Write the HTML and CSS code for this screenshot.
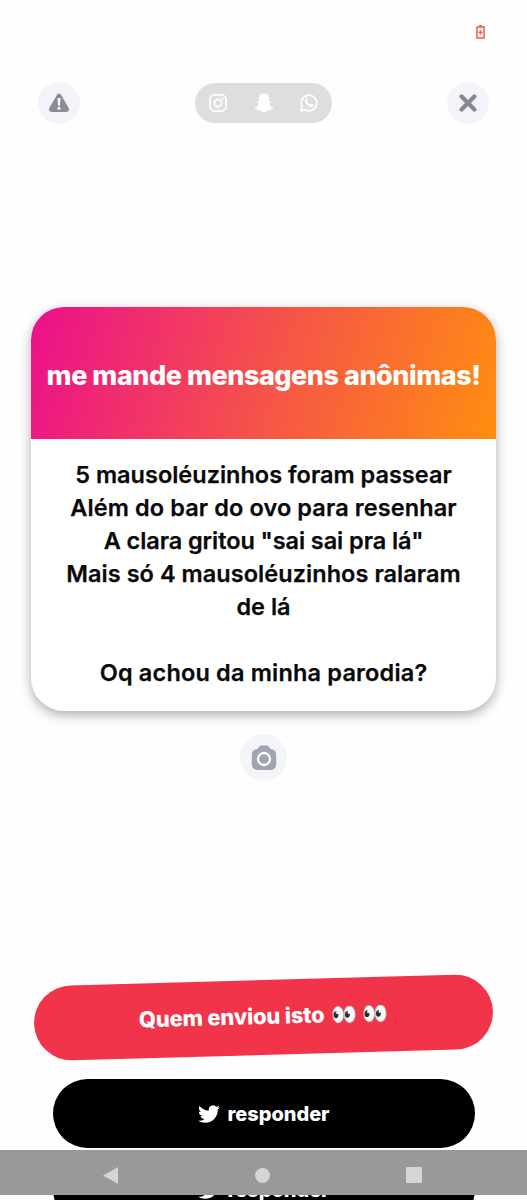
FILE: index.html
```
<!DOCTYPE html>
<html lang="pt-BR">
<head>
<meta charset="utf-8">
<title>me mande mensagens anônimas!</title>
<link rel="stylesheet" href="styles.css">
</head>
<body>
<div class="screen">
  <header class="status">
    <svg width="9" height="14" viewBox="0 0 9 14"><path d="M3 0h3v1.5H3z" fill="#e8624a"/><path d="M.9 2h7.2v11.1H.9z" fill="#fff3ec" stroke="#e8624a" stroke-width="1.5"/><path d="M4.5 5.2v4.4M2.4 7.4h4.2" stroke="#e8624a" stroke-width="1.4"/></svg>
  </header>
  <nav class="top">
    <button class="round" aria-label="Denunciar">
      <svg width="22" height="20" viewBox="0 0 22 20"><path d="M9 1.7Q11 -.8 13 1.7L20.7 15.1Q22 18.6 18.4 19H3.6Q0 18.6 1.3 15.1Z" fill="#8b8e98"/><path d="M9.6 5h2.8l-.4 7.7h-2z" fill="#f8f8fc"/><circle cx="11" cy="15.2" r="1.5" fill="#f8f8fc"/></svg>
    </button>
    <div class="networks">
      <svg width="18" height="18" viewBox="0 0 18 18" fill="none" stroke="#fff" stroke-width="1.7"><rect x=".9" y=".9" width="16.2" height="16.2" rx="4.6"/><circle cx="9" cy="9" r="3.6"/><circle cx="13.6" cy="4.4" r="1" fill="#fff" stroke="none"/></svg>
      <svg width="20" height="20" viewBox="0 0 20 20" fill="#fff"><path d="M10 .5C13.6.5 15.4 2.9 15.3 5.8L15.1 8.2C15.8 8.7 17 7.6 17.4 8.6C17.7 9.5 15.9 10 15.4 10.7C15.3 12.7 17.4 14.1 19.3 14.6C19.6 15.5 17.8 15.8 17 16.1C16.6 16.6 17 17.2 16.4 17.4C15.6 17.5 14.6 17.1 13.7 17.5C12.5 18 11.8 19.5 10 19.5S7.5 18 6.3 17.5C5.4 17.1 4.4 17.5 3.6 17.4C3 17.2 3.4 16.6 3 16.1C2.2 15.8.4 15.5.7 14.6C2.6 14.1 4.7 12.7 4.6 10.7C4.1 10 2.3 9.5 2.6 8.6C3 7.6 4.2 8.7 4.9 8.2L4.7 5.8C4.6 2.9 6.4.5 10 .5Z"/></svg>
      <svg width="18" height="18" viewBox="0 0 18 18"><path d="M1.1 16.9L2.2 12.8A7.8 7.8 0 1 1 5.2 15.8Z" fill="none" stroke="#fff" stroke-width="1.7" stroke-linejoin="round"/><path d="M6.1 4.6C6.5 4.3 7 4.3 7.2 4.8L7.9 6.5C8 6.9 7.4 7.5 7.2 7.8C7.8 9.1 8.8 10 10.2 10.6C10.6 10.3 11 9.5 11.5 9.7L13.1 10.5C13.7 10.8 13.4 11.8 13 12.3C12.3 13 11.2 13.2 10.2 12.8C7.7 12 5.9 10.2 5 7.8C4.6 6.6 5.2 5.2 6.1 4.6Z" fill="#fff"/></svg>
    </div>
    <button class="round" aria-label="Fechar">
      <svg width="18" height="18" viewBox="0 0 18 18"><path d="M2.6 2.6L15.4 15.4M15.4 2.6L2.6 15.4" stroke="#858890" stroke-width="4.2" stroke-linecap="round"/></svg>
    </button>
  </nav>
  <main class="content">
    <article class="card">
      <h1 class="prompt">me mande mensagens anônimas!</h1>
      <div class="message">
        <p class="l1">5 mausoléuzinhos foram passear</p>
        <p class="l2">Além do bar do ovo para resenhar</p>
        <p class="l3">A clara gritou "sai sai pra lá"</p>
        <p class="l4">Mais só 4 mausoléuzinhos ralaram</p>
        <p class="l5">de lá</p>
        <p class="l6">Oq achou da minha parodia?</p>
      </div>
    </article>
    <button class="camera" aria-label="Câmera">
      <svg width="26" height="26" viewBox="0 0 26 26"><path d="M8.3 1.4Q8.8.6 9.8.6H16.2Q17.2.6 17.7 1.4L19.4 4Q25 4.2 25.2 9.5V19Q25 25 19 25H7Q1 25 .8 19V9.5Q1 4.2 6.6 4Z" fill="#a0a5b1"/><circle cx="13" cy="14" r="6" fill="none" stroke="#fff" stroke-width="2.3"/></svg>
    </button>
  </main>
  <section class="actions">
    <button class="who"><span class="who-text">Quem enviou isto</span><span class="eyes">👀</span><span class="eyes">👀</span></button>
    <button class="reply"><svg width="22" height="18" viewBox="0 2 24 20" preserveAspectRatio="none"><path d="M23.95 4.57a10 10 0 0 1-2.82.78 4.96 4.96 0 0 0 2.16-2.73c-.95.56-2 .96-3.13 1.19a4.92 4.92 0 0 0-8.38 4.48C7.69 8.1 4.07 6.13 1.64 3.16a4.82 4.82 0 0 0-.67 2.48c0 1.71.87 3.21 2.19 4.1a4.9 4.9 0 0 1-2.23-.62v.06a4.92 4.92 0 0 0 3.95 4.83 5 5 0 0 1-2.21.08 4.94 4.94 0 0 0 4.6 3.42A9.87 9.87 0 0 1 0 19.54a13.99 13.99 0 0 0 7.56 2.21c9.05 0 14-7.5 14-13.98 0-.21 0-.42-.02-.63a9.94 9.94 0 0 0 2.41-2.57z" fill="#fff"/></svg><span>responder</span></button>
    <button class="reply"><svg width="22" height="18" viewBox="0 2 24 20" preserveAspectRatio="none"><path d="M23.95 4.57a10 10 0 0 1-2.82.78 4.96 4.96 0 0 0 2.16-2.73c-.95.56-2 .96-3.13 1.19a4.92 4.92 0 0 0-8.38 4.48C7.69 8.1 4.07 6.13 1.64 3.16a4.82 4.82 0 0 0-.67 2.48c0 1.71.87 3.21 2.19 4.1a4.9 4.9 0 0 1-2.23-.62v.06a4.92 4.92 0 0 0 3.95 4.83 5 5 0 0 1-2.21.08 4.94 4.94 0 0 0 4.6 3.42A9.87 9.87 0 0 1 0 19.54a13.99 13.99 0 0 0 7.56 2.21c9.05 0 14-7.5 14-13.98 0-.21 0-.42-.02-.63a9.94 9.94 0 0 0 2.41-2.57z" fill="#fff"/></svg><span>responder</span></button>
  </section>
  <footer class="system">
    <svg width="15" height="17" viewBox="0 0 15 17"><path d="M0 8.5L15 0V17Z" fill="#d5d5d5"/></svg>
    <svg width="15" height="15" viewBox="0 0 15 15"><circle cx="7.5" cy="7.5" r="7.5" fill="#d5d5d5"/></svg>
    <svg width="16" height="16" viewBox="0 0 16 16"><rect width="16" height="16" rx="1" fill="#d5d5d5"/></svg>
  </footer>
</div>
</body>
</html>
```
FILE: styles.css
```
* { box-sizing: border-box; }
body { margin: 0; background: #fefefe; font-family: Inter, "Liberation Sans", sans-serif; }
button { border: 0; padding: 0; font: inherit; }
svg { display: block; flex: none; }
h1, p { margin: 0; }
.screen { position: relative; width: 527px; height: 1200px; overflow: hidden; display: flex; flex-direction: column; }
.status { height: 82px; padding: 25px 42px 0 0; display: flex; justify-content: flex-end; flex: none; }
.top { height: 42px; padding: 0 38px; display: flex; justify-content: space-between; align-items: center; flex: none; }
.round { width: 42px; height: 42px; border-radius: 50%; background: #f3f4fa; display: grid; place-items: center; }
.networks { width: 137px; height: 40px; border-radius: 20px; background: #dededf; display: flex; align-items: center; justify-content: space-between; padding: 0 14px; }
.content { padding: 183px 31px 0; display: flex; flex-direction: column; align-items: center; flex: none; }
.card { width: 465px; height: 404px; border-radius: 33px; background: #fff; overflow: hidden; box-shadow: 0 4px 12px rgba(0, 0, 0, .32); }
.prompt { height: 132px; padding-top: 5px; display: flex; align-items: center; justify-content: center; background: linear-gradient(106deg, #ec0f8b, #f5514b 50%, #ff8e10); color: #fff; font-size: 27px; font-weight: 800; letter-spacing: -.47px; white-space: nowrap; }
.message { padding-top: 19px; color: #090909; font-size: 23.5px; font-weight: 600; line-height: 33.1px; text-align: center; white-space: nowrap; -webkit-text-stroke: .25px #090909; }
.l2 { letter-spacing: .1px; }
.l3 { letter-spacing: -.07px; }
.l4 { letter-spacing: .05px; }
.l6 { padding-top: 33px; letter-spacing: .18px; }
.camera { margin-top: 23px; width: 47px; height: 47px; border-radius: 50%; background: #f3f5f9; display: grid; place-items: center; }
.actions { height: 226px; margin-top: 192px; display: flex; flex-direction: column; align-items: center; flex: none; color: #fff; font-weight: 800; }
.who { flex: none; width: 459px; height: 75px; margin-top: 7px; padding-bottom: 3px; border-radius: 38px; background: #f13449; color: #fff; font-size: 22px; letter-spacing: -.22px; display: flex; align-items: center; justify-content: center; transform: rotate(-1.6deg); }
.eyes { margin-left: 6px; font-size: 21px; }
.reply { flex: none; width: 422px; height: 69px; margin-top: 24px; border-radius: 35px; background: #000; color: #fff; font-size: 20px; letter-spacing: -.05px; display: flex; align-items: center; justify-content: center; gap: 8px; }
.reply + .reply { margin-top: 7px; }
.system { position: absolute; left: 0; top: 1150px; width: 527px; height: 45px; padding: 5px 105px 0 103px; background: #999; display: flex; align-items: center; justify-content: space-between; }
```
